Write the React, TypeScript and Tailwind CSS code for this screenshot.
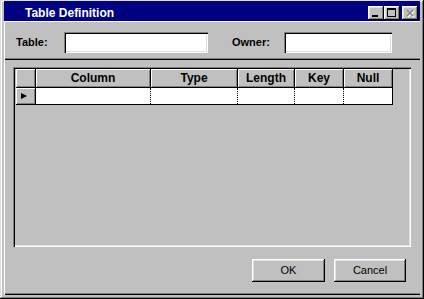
import React from 'react'

const raised =
  'shadow-[inset_-1px_-1px_#000,inset_1px_1px_#fff,inset_-2px_-2px_#808080,inset_2px_2px_#dfdfdf]'
const sunken =
  'shadow-[inset_1px_1px_#808080,inset_2px_2px_#000,inset_-1px_-1px_#fff,inset_-2px_-2px_#dfdfdf]'

const columns = [
  { label: '', w: 'w-[20px]' },
  { label: 'Column', w: 'w-[115px]' },
  { label: 'Type', w: 'w-[87px]' },
  { label: 'Length', w: 'w-[57px]' },
  { label: 'Key', w: 'w-[49px]' },
  { label: 'Null', w: 'w-[49px]' },
]

function TitleButton({ children }: { children: React.ReactNode }) {
  return (
    <div className={`relative w-[16px] h-[14px] bg-[#c0c0c0] ${raised}`}>
      <svg width="16" height="14" className="absolute inset-0">
        {children}
      </svg>
    </div>
  )
}

function TitleBar() {
  return (
    <div className="h-[20px] bg-[#000080] flex items-center pl-[21px] pr-[2px] pt-[3px]">
      <span className="text-white font-bold text-[12px] leading-none">Table Definition</span>
      <div className="ml-auto flex items-center">
        {/* minimize */}
        <TitleButton>
          <rect x="4" y="9" width="6" height="2" fill="#000" />
        </TitleButton>
        {/* maximize */}
        <TitleButton>
          <rect x="3.5" y="2.5" width="8" height="8" fill="none" stroke="#000" />
          <rect x="3" y="3" width="9" height="1" fill="#000" />
        </TitleButton>
        {/* close, disabled */}
        <div className="ml-[2px]">
          <TitleButton>
            <path d="M5 4 L11 10 M11 4 L5 10" stroke="#fff" strokeWidth="1.4" transform="translate(1 1)" />
            <path d="M5 4 L11 10 M11 4 L5 10" stroke="#808080" strokeWidth="1.4" />
          </TitleButton>
        </div>
      </div>
    </div>
  )
}

function Field({ label, labelW, inputW }: { label: string; labelW: string; inputW: string }) {
  return (
    <div className="flex items-center">
      <span className={`${labelW} font-bold text-[11px] text-black`}>{label}</span>
      <div className={`${inputW} h-[21px] bg-white ${sunken}`} />
    </div>
  )
}

function Grid() {
  return (
    <div className="pl-[1px]">
      {/* header */}
      <div className="flex border-b border-black h-[19px] w-fit">
        {columns.map((c, i) => (
          <div
            key={i}
            className={`${c.w} h-full border-r border-black bg-[#c0c0c0] shadow-[inset_1px_1px_#fff,inset_-1px_-1px_#808080] flex items-center justify-center font-bold text-[12px] text-black`}
          >
            {c.label}
          </div>
        ))}
      </div>
      {/* row */}
      <div className="flex border-b border-black h-[17px] w-fit">
        {columns.map((c, i) =>
          i === 0 ? (
            <div
              key={i}
              className={`${c.w} h-full border-r border-black bg-[#c0c0c0] shadow-[inset_1px_1px_#fff,inset_-1px_-1px_#808080] flex items-center justify-center`}
            >
              <svg width="6" height="6" className="ml-[-3px]">
                <polygon points="0,0 6,3 0,6" fill="#000" />
              </svg>
            </div>
          ) : (
            <div
              key={i}
              className={`${c.w} h-full bg-white border-r border-black ${i < columns.length - 1 ? 'border-dotted' : 'border-solid'}`}
            />
          )
        )}
      </div>
    </div>
  )
}

function Button({ label, w }: { label: string; w: string }) {
  return (
    <div className={`${w} h-[23px] bg-[#c0c0c0] ${raised} flex items-center justify-center text-[11px] text-black`}>
      {label}
    </div>
  )
}

export default function App() {
  return (
    <div
      className="w-[424px] h-[299px] bg-[#c0c0c0] shadow-[inset_-1px_-1px_#000,inset_1px_1px_#dfdfdf,inset_-2px_-2px_#808080,inset_2px_2px_#fff] flex flex-col pt-[1px] px-[4px] pb-[4px]"
      style={{ fontFamily: '"Liberation Sans", Arial, sans-serif' }}
    >
      <TitleBar />

      {/* fields panel */}
      <div className="h-[39px] shadow-[inset_1px_1px_#fff,inset_0_-1px_#000,inset_0_-2px_#808080] flex items-center pl-[12px] pt-[3px]">
        <Field label="Table:" labelW="w-[48px]" inputW="w-[144px]" />
        <div className="ml-[24px]">
          <Field label="Owner:" labelW="w-[52px]" inputW="w-[108px]" />
        </div>
      </div>

      {/* grid panel */}
      <div className="flex-1 shadow-[inset_1px_0_#fff,inset_0_-1px_#000,inset_0_-2px_#808080] flex flex-col pl-[9px] pr-[9px] pt-[7px]">
        <div className={`h-[180px] p-[2px] ${sunken}`}>
          <Grid />
        </div>
        <div className="flex justify-end gap-[9px] mt-[12px] pr-[5px]">
          <Button label="OK" w="w-[73px]" />
          <Button label="Cancel" w="w-[72px]" />
        </div>
      </div>
    </div>
  )
}
